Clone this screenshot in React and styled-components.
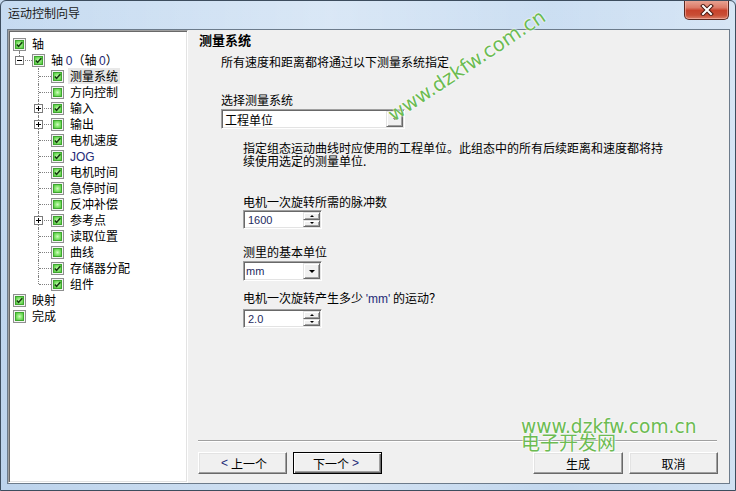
import React from "react";
import styled, { createGlobalStyle, css } from "styled-components";

const GlobalStyle = createGlobalStyle`
  html, body { margin: 0; padding: 0; width: 736px; height: 491px; overflow: hidden; background: #c5d9ee; }
  body { font-family: "Noto Sans CJK SC", "Noto Sans", sans-serif; font-size: 12px; color: #000; }
  * { box-sizing: border-box; }
`;

const Window = styled.div`
  position: relative;
  width: 736px;
  height: 491px;
  display: flex;
  flex-direction: column;
  border: 1px solid #3d4d5e;
  border-radius: 6px 6px 0 0;
  overflow: hidden;
  background:
    linear-gradient(90deg, rgba(255,255,255,0) 0%, rgba(255,255,255,0.35) 45%, rgba(255,255,255,0.1) 75%, rgba(255,255,255,0.3) 100%),
    linear-gradient(180deg, #c6dbf1 0%, #bcd3ec 100%);
`;

const TitleBar = styled.div`
  height: 28px;
  display: flex;
  align-items: flex-start;
  padding-left: 7px;
`;

const TitleText = styled.div`
  line-height: 24px;
  font-size: 12px;
  color: #1a1a1a;
`;

const CloseBtn = styled.div`
  margin-left: auto;
  margin-right: 6px;
  margin-top: -1px;
  width: 45px;
  height: 20px;
  border: 1px solid #5a2820;
  border-top: none;
  border-radius: 0 0 5px 5px;
  background: linear-gradient(180deg, #e9a898 0%, #dc7b68 40%, #c7422c 55%, #c94e36 80%, #d9806a 100%);
  display: flex;
  align-items: center;
  justify-content: center;
  box-shadow: inset 0 0 0 1px rgba(255, 200, 190, 0.5);
`;

const Client = styled.div`
  flex: 1;
  display: flex;
  margin: 0 5px 6px 6px;
  border: 1px solid #6c7b8b;
  background: #f0f0f0;
  min-height: 0;
`;

const Tree = styled.div`
  width: 180px;
  background: #fff;
  border: 1px solid;
  border-color: #a0a0a0 #fff #fff #a0a0a0;
  box-shadow: inset 1px 1px 0 #696969, inset -1px -1px 0 #e3e3e3;
  padding-top: 5px;
  padding-left: 1px;
`;

const Row = styled.div`
  height: 16px;
  display: flex;
  align-items: center;
  padding-left: 3px;
`;

const dotV = css`
  content: "";
  position: absolute;
  left: 6px;
  border-left: 1px dotted #808080;
`;

const Guide = styled.span`
  position: relative;
  width: 19px;
  height: 16px;
  flex: none;
  ${(p) =>
    p.$v === "full" &&
    css`
      &::before { ${dotV} top: 0; bottom: 0; }
    `}
  ${(p) =>
    p.$v === "half" &&
    css`
      &::before { ${dotV} top: 0; height: 8px; }
    `}
  ${(p) =>
    p.$v === "top" &&
    css`
      &::before { ${dotV} top: 0; height: 4px; }
    `}
  ${(p) =>
    p.$h &&
    css`
      &::after {
        content: "";
        position: absolute;
        left: 7px;
        right: 0;
        top: 8px;
        border-top: 1px dotted #808080;
      }
    `}
`;

const Expander = styled.span`
  position: absolute;
  left: 2px;
  top: 4px;
  width: 9px;
  height: 9px;
  border: 1px solid #7b7b7b;
  background: #fff;
  z-index: 1;
  &::before {
    content: "";
    position: absolute;
    left: 1px;
    top: 3px;
    width: 5px;
    height: 1px;
    background: #000;
  }
  ${(p) =>
    p.$plus &&
    css`
      &::after {
        content: "";
        position: absolute;
        left: 3px;
        top: 1px;
        width: 1px;
        height: 5px;
        background: #000;
      }
    `}
`;

const CheckWrap = styled.span`
  position: relative;
  width: 13px;
  height: 13px;
  flex: none;
  ${(p) =>
    p.$stem &&
    css`
      &::after {
        content: "";
        position: absolute;
        left: 6px;
        top: 13px;
        height: 3px;
        border-left: 1px dotted #808080;
      }
    `}
`;

const CheckBox = styled.span`
  display: flex;
  width: 13px;
  height: 13px;
  border: 1px solid #8e8f8f;
  background: #f4f4f4;
  padding: 1px;
`;

const CheckFill = styled.span`
  flex: 1;
  display: flex;
  border: 1px solid #3fa62f;
  background: radial-gradient(circle at 50% 50%, #d2fbc0 0%, #8be874 45%, #4cc33a 100%);
`;

const Label = styled.span`
  margin-left: 4px;
  padding: 0 2px;
  line-height: 16px;
  white-space: nowrap;
  ${(p) => p.$selected && css`background: #e8e8e8;`}
`;

const Latin = styled.span`
  font-family: "Liberation Sans", "DejaVu Sans", sans-serif;
  font-size: 12px;
  color: #1e2a78;
`;

const Right = styled.div`
  flex: 1;
  display: flex;
  flex-direction: column;
  min-width: 0;
`;

const Heading = styled.div`
  margin: 2px 0 0 11px;
  font-size: 13px;
  font-weight: bold;
  line-height: 16px;
`;

const Section = styled.div`
  padding-left: 33px;
`;

const Sub = styled.div`
  padding-left: 22px;
`;

const Text = styled.div`
  line-height: 16px;
  margin-top: ${(p) => p.$mt || 0}px;
  white-space: nowrap;
`;

const Para = styled.div`
  margin-top: 12px;
  line-height: 13px;
  white-space: nowrap;
`;

const Field = styled.div`
  margin-top: ${(p) => p.$mt || 0}px;
  width: ${(p) => p.$w}px;
  height: ${(p) => p.$h}px;
  display: flex;
  background: #fff;
  border: 1px solid;
  border-color: #a0a0a0 #fff #fff #a0a0a0;
  box-shadow: inset 1px 1px 0 #696969, inset -1px -1px 0 #e3e3e3;
  padding: 1px;
`;

const FieldText = styled.div`
  flex: 1;
  display: flex;
  align-items: center;
  padding-left: ${(p) => p.$pl ?? 2}px;
  font-size: ${(p) => (p.$latin ? 11 : 12)}px;
  font-family: ${(p) =>
    p.$latin ? '"Liberation Sans", "DejaVu Sans", sans-serif' : '"Noto Sans CJK SC", sans-serif'};
  color: ${(p) => (p.$latin ? "#1e2a60" : "#000")};
`;

const raised = css`
  background: #f0f0f0;
  border: 1px solid;
  border-color: #e3e3e3 #696969 #696969 #e3e3e3;
  box-shadow: inset 1px 1px 0 #fff, inset -1px -1px 0 #a0a0a0;
`;

const DropBtn = styled.div`
  ${raised}
  width: 17px;
  display: flex;
  align-items: center;
  justify-content: center;
`;

const Tri = styled.span`
  width: 0;
  height: 0;
  border-left: ${(p) => p.$s}px solid transparent;
  border-right: ${(p) => p.$s}px solid transparent;
  border-top: ${(p) => p.$s}px solid #000;
  ${(p) => p.$up && css`border-top: none; border-bottom: ${p.$s}px solid #000;`}
`;

const SpinCol = styled.div`
  width: 17px;
  display: flex;
  flex-direction: column;
`;

const SpinBtn = styled.div`
  ${raised}
  flex: 1;
  display: flex;
  align-items: center;
  justify-content: center;
`;

const Footer = styled.div`
  margin-top: auto;
`;

const Separator = styled.div`
  margin: 0 12px 0 10px;
  border-top: 1px solid #a0a0a0;
  border-bottom: 1px solid #fff;
`;

const ButtonRow = styled.div`
  display: flex;
  gap: 6px;
  padding: 10px 11px 9px 10px;
`;

const Spacer = styled.div`
  flex: 1;
`;

const PushButton = styled.div`
  width: ${(p) => p.$w || 89}px;
  height: 22px;
  display: flex;
  align-items: center;
  justify-content: center;
  font-size: 12px;
  background: #f0f0f0;
  border: 1px solid;
  border-color: #fff #696969 #696969 #fff;
  box-shadow: inset -1px -1px 0 #a0a0a0, inset 1px 1px 0 #e3e3e3;
  ${(p) =>
    p.$default &&
    css`
      border-color: #000;
      box-shadow: inset 1px 1px 0 #fff, inset -1px -1px 0 #696969, inset -2px -2px 0 #a0a0a0;
    `}
`;

const Arrow = styled.span`
  font-family: "Liberation Sans", "DejaVu Sans", sans-serif;
  font-size: 12px;
  color: #1e2a78;
  margin: 0 3px;
`;

const WatermarkDiag = styled.div`
  position: absolute;
  left: 372px;
  top: 54px;
  width: 188px;
  line-height: 22px;
  text-align: center;
  font-family: "DejaVu Sans", sans-serif;
  font-size: 19.5px;
  color: #6cbb52;
  white-space: nowrap;
  transform: rotate(-33.6deg);
  text-shadow: 0 0 2px #fff, 0 0 2px #fff;
  pointer-events: none;
`;

const WatermarkLine = styled.div`
  position: absolute;
  left: 520px;
  top: ${(p) => p.$top}px;
  line-height: ${(p) => p.$lh}px;
  font-family: ${(p) => (p.$cjk ? '"Noto Sans CJK SC", sans-serif' : '"DejaVu Sans", sans-serif')};
  font-size: ${(p) => p.$fs}px;
  color: #6cbb52;
  white-space: nowrap;
  text-shadow: 0 0 2px #fff, 0 0 2px #fff;
  pointer-events: none;
`;

function Check({ checked, stem }) {
  return (
    <CheckWrap $stem={stem}>
      <CheckBox>
        <CheckFill>
          {checked && (
            <svg width="7" height="7" viewBox="0 0 7 7">
              <path d="M0.8 3.4 L2.6 5.3 L6.3 1.2" stroke="#183c12" strokeWidth="1.5" fill="none" />
            </svg>
          )}
        </CheckFill>
      </CheckBox>
    </CheckWrap>
  );
}

const items = [
  { level: 0, label: "轴", checked: true, stem: true },
  { level: 1, label: ["轴 ", <Latin key="a">0</Latin>, "（轴 ", <Latin key="b">0</Latin>, "）"], checked: true, exp: "-" },
  { level: 2, label: "测量系统", checked: true, selected: true },
  { level: 2, label: "方向控制", checked: false },
  { level: 2, label: "输入", checked: true, exp: "+" },
  { level: 2, label: "输出", checked: false, exp: "+" },
  { level: 2, label: "电机速度", checked: true },
  { level: 2, label: <Latin>JOG</Latin>, checked: true },
  { level: 2, label: "电机时间", checked: true },
  { level: 2, label: "急停时间", checked: false },
  { level: 2, label: "反冲补偿", checked: false },
  { level: 2, label: "参考点", checked: true, exp: "+" },
  { level: 2, label: "读取位置", checked: false },
  { level: 2, label: "曲线", checked: false },
  { level: 2, label: "存储器分配", checked: true },
  { level: 2, label: "组件", checked: true, last: true },
  { level: 0, label: "映射", checked: true },
  { level: 0, label: "完成", checked: false },
];

function TreeRow({ item }) {
  const guides = [];
  if (item.level === 1) {
    guides.push(
      <Guide key="g0" $v="top" $h>
        <Expander $plus={item.exp === "+"} />
      </Guide>
    );
  }
  if (item.level === 2) {
    guides.push(<Guide key="g0" />);
    guides.push(
      <Guide key="g1" $v={item.last ? "half" : "full"} $h>
        {item.exp && <Expander $plus={item.exp === "+"} />}
      </Guide>
    );
  }
  return (
    <Row>
      {guides}
      <Check checked={item.checked} stem={item.stem} />
      <Label $selected={item.selected}>{item.label}</Label>
    </Row>
  );
}

function Combo({ w, text, latin, small, mt }) {
  return (
    <Field $w={w} $h={20} $mt={mt}>
      <FieldText $latin={latin} $pl={latin ? 1 : 2}>{text}</FieldText>
      <DropBtn>
        <Tri $s={small ? 2 : 3} />
      </DropBtn>
    </Field>
  );
}

function Spinner({ text, mt }) {
  return (
    <Field $w={79} $h={19} $mt={mt}>
      <FieldText $latin $pl={3}>{text}</FieldText>
      <SpinCol>
        <SpinBtn>
          <Tri $s={2} $up />
        </SpinBtn>
        <SpinBtn>
          <Tri $s={2} />
        </SpinBtn>
      </SpinCol>
    </Field>
  );
}

export default function App() {
  return (
    <>
      <GlobalStyle />
      <Window>
        <TitleBar>
          <TitleText>运动控制向导</TitleText>
          <CloseBtn>
            <svg width="14" height="12" viewBox="0 0 14 12">
              <path d="M3 2 L11 10 M11 2 L3 10" stroke="#4a1a12" strokeWidth="4" strokeLinecap="square" />
              <path d="M3 2 L11 10 M11 2 L3 10" stroke="#ffffff" strokeWidth="2" strokeLinecap="square" />
            </svg>
          </CloseBtn>
        </TitleBar>
        <Client>
          <Tree>
            {items.map((it, i) => (
              <TreeRow key={i} item={it} />
            ))}
          </Tree>
          <Right>
            <Heading>测量系统</Heading>
            <Section>
              <Text $mt={6}>所有速度和距离都将通过以下测量系统指定</Text>
              <Text $mt={22}>选择测量系统</Text>
              <Combo w={184} text="工程单位" small mt={1} />
              <Sub>
                <Para>
                  指定组态运动曲线时应使用的工程单位。此组态中的所有后续距离和速度都将持
                  <br />
                  续使用选定的测量单位.
                </Para>
                <Text $mt={27}>电机一次旋转所需的脉冲数</Text>
                <Spinner text="1600" />
                <Text $mt={15}>测里的基本单位</Text>
                <Combo w={79} text="mm" latin mt={1} />
                <Text $mt={9}>
                  电机一次旋转产生多少 <Latin>'mm'</Latin> 的运动？
                </Text>
                <Spinner text="2.0" mt={2} />
              </Sub>
            </Section>
            <Footer>
              <Separator />
              <ButtonRow>
                <PushButton>
                  <Arrow>&lt;</Arrow>上一个
                </PushButton>
                <PushButton $default>
                  下一个<Arrow>&gt;</Arrow>
                </PushButton>
                <Spacer />
                <PushButton $w={90}>生成</PushButton>
                <PushButton>取消</PushButton>
              </ButtonRow>
            </Footer>
          </Right>
        </Client>
        <WatermarkDiag>www.dzkfw.com.cn</WatermarkDiag>
        <WatermarkLine $top={416} $lh={20} $fs={18.6}>www.dzkfw.com.cn</WatermarkLine>
        <WatermarkLine $top={430} $lh={21} $fs={19} $cjk>电子开发网</WatermarkLine>
      </Window>
    </>
  );
}
